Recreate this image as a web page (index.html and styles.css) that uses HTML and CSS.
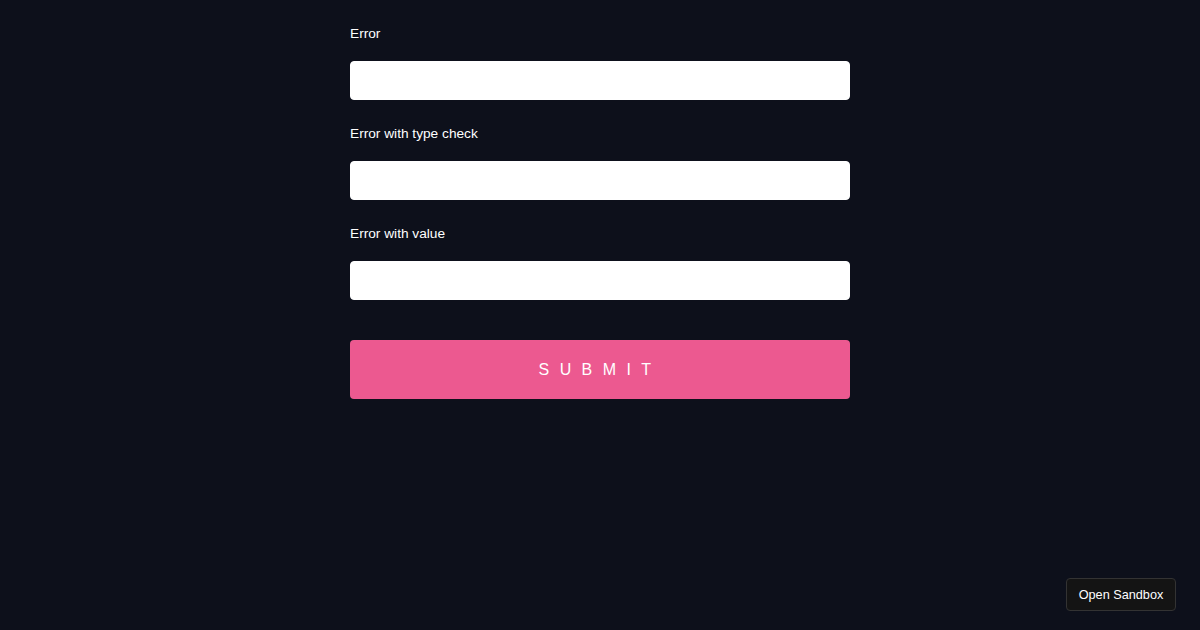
FILE: index.html
```html
<!DOCTYPE html>
<html>
<head>
<meta charset="utf-8">
<link rel="stylesheet" href="styles.css">
</head>
<body>
<form class="form">
  <label class="label">Error</label>
  <input class="input" type="text">
  <label class="label">Error with type check</label>
  <input class="input" type="text">
  <label class="label">Error with value</label>
  <input class="input" type="text">
  <button class="submit" type="button">Submit</button>
</form>
<button class="sandbox" type="button">Open Sandbox</button>
</body>
</html>
```
FILE: styles.css
```css
html, body {
  margin: 0;
  padding: 0;
  background: #0d101b;
  height: 100%;
}
body {
  font-family: "Liberation Sans", Arial, sans-serif;
  overflow: hidden;
}
.form {
  width: 500px;
  margin: 0 auto;
  display: flex;
  flex-direction: column;
}
.label {
  display: block;
  color: #fff;
  font-size: 13.7px;
  line-height: 20px;
  margin-top: 24px;
  margin-bottom: 17px;
}
.input {
  display: block;
  box-sizing: border-box;
  width: 100%;
  height: 39px;
  margin: 0;
  border: 1px solid #fff;
  border-radius: 4px;
  background: #fff;
  padding: 10px 15px;
  font-size: 14px;
}
.submit {
  margin-top: 40px;
  height: 59px;
  width: 100%;
  border: none;
  border-radius: 4px;
  background: #ec5990;
  color: #fff;
  font-family: "Liberation Sans", Arial, sans-serif;
  font-size: 16px;
  text-transform: uppercase;
  letter-spacing: 10.4px;
  padding: 0;
}
.sandbox {
  position: fixed;
  right: 24px;
  bottom: 19px;
  box-sizing: border-box;
  width: 110px;
  height: 33px;
  padding: 0;
  background: #141414;
  color: #fff;
  border: 1px solid #333;
  border-radius: 4px;
  font-family: "Liberation Sans", Arial, sans-serif;
  font-size: 12.7px;
}
```
